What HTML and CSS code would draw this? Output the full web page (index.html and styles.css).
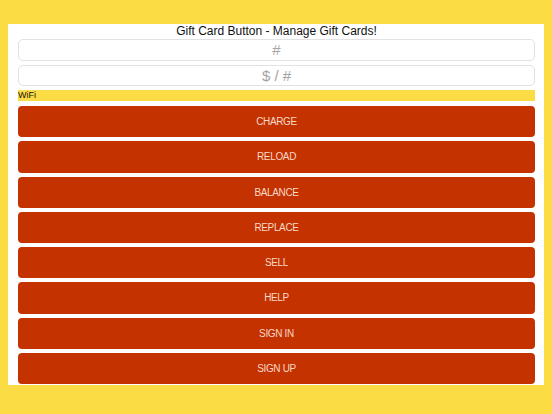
FILE: index.html
```html
<!DOCTYPE html>
<html>
<head>
<meta charset="utf-8">
<link rel="stylesheet" href="styles.css">
</head>
<body>
<div class="panel">
  <div class="title">Gift Card Button - Manage Gift Cards!</div>
  <div class="field">#</div>
  <div class="field">$ / #</div>
  <div class="wifi">WiFi</div>
  <div class="buttons">
    <div class="btn">CHARGE</div>
    <div class="btn">RELOAD</div>
    <div class="btn">BALANCE</div>
    <div class="btn">REPLACE</div>
    <div class="btn">SELL</div>
    <div class="btn">HELP</div>
    <div class="btn">SIGN IN</div>
    <div class="btn">SIGN UP</div>
  </div>
</div>
</body>
</html>
```
FILE: styles.css
```css
html, body {
  margin: 0;
  padding: 0;
  background: #fcdc45;
  font-family: "Liberation Sans", Arial, sans-serif;
}
.panel {
  margin: 24px 0 0 8px;
  width: 536px;
  height: 361px;
  box-sizing: border-box;
  background: #fff;
  padding: 0 9px 0 10px;
  display: flex;
  flex-direction: column;
}
.title {
  height: 15px;
  line-height: 14px;
  font-size: 12px;
  text-align: center;
  color: #111;
}
.field {
  height: 22px;
  box-sizing: border-box;
  border: 1px solid #e2e2e2;
  border-radius: 5px;
  text-align: center;
  font-size: 15px;
  line-height: 20px;
  color: #a4a4a4;
  margin-bottom: 4px;
}
.field + .field {
  height: 21px;
  line-height: 19px;
}
.wifi {
  height: 11px;
  background: #fcdc45;
  font-size: 9px;
  line-height: 11px;
  color: #111;
  margin-bottom: 5px;
}
.buttons {
  display: flex;
  flex-direction: column;
  gap: 4px;
}
.btn {
  height: 31.25px;
  background: #c43200;
  border-radius: 4px;
  color: #f6d8c8;
  font-size: 10px;
  letter-spacing: -0.35px;
  line-height: 31px;
  text-align: center;
}
```
